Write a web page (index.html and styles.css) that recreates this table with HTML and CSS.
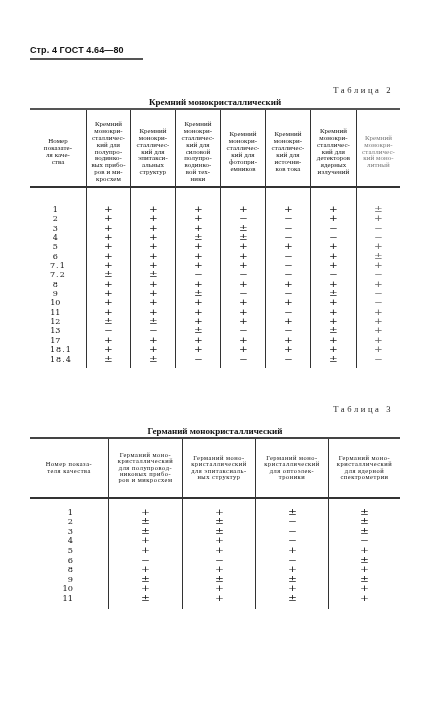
FILE: index.html
```html
<!DOCTYPE html>
<html lang="ru">
<head>
<meta charset="utf-8">
<title>ГОСТ 4.64—80, стр. 4</title>
<link rel="stylesheet" href="styles.css">
</head>
<body>
<div class="page">
  <div class="runhead">Стр. 4 ГОСТ 4.64—80</div>

  <div class="caption cap2">Таблица 2</div>
  <div class="title t2title">Кремний монокристаллический</div>

  <div class="t2">
    <div class="hc hnum">Номер<br>показате-<br>ля каче-<br>ства</div>
    <div class="hc vl">Кремний<br>монокри-<br>сталличес-<br>кий для<br>полупро-<br>водинко-<br>вых прибо-<br>ров и ми-<br>кросхем</div>
    <div class="hc vl">Кремний<br>монокри-<br>сталличес-<br>кий для<br>эпитакси-<br>альных<br>структур</div>
    <div class="hc vl">Кремний<br>монокри-<br>сталличес-<br>кий для<br>силовой<br>полупро-<br>водинко-<br>вой тех-<br>ники</div>
    <div class="hc vl">Кремний<br>монокри-<br>сталличес-<br>кий для<br>фотопри-<br>емников</div>
    <div class="hc vl">Кремний<br>монокри-<br>сталличес-<br>кий для<br>источни-<br>ков тока</div>
    <div class="hc vl">Кремний<br>монокри-<br>сталличес-<br>кий для<br>детекторов<br>ядерных<br>излучений</div>
    <div class="hc vl faded">Кремний<br>монокри-<br>сталличес-<br>кий моно-<br>литный</div>

    <div class="nc nc2">
      <div><span class="i">1</span></div><div><span class="i">2</span></div><div><span class="i">3</span></div><div><span class="i">4</span></div><div><span class="i">5</span></div><div><span class="i">6</span></div><div class="d">7.1</div><div class="d">7.2</div><div><span class="i">8</span></div><div><span class="i">9</span></div><div><span class="i">10</span></div><div><span class="i">11</span></div><div><span class="i">12</span></div><div><span class="i">13</span></div><div><span class="i">17</span></div><div class="d">18.1</div><div class="d">18.4</div>
    </div>
    <div class="bc b2 vl"><div><span>+</span></div><div><span>+</span></div><div><span>+</span></div><div><span>+</span></div><div><span>+</span></div><div><span>+</span></div><div><span>+</span></div><div><span>±</span></div><div><span>+</span></div><div><span>+</span></div><div><span>+</span></div><div><span>+</span></div><div><span>±</span></div><div><span>−</span></div><div><span>+</span></div><div><span>+</span></div><div><span>±</span></div></div>
    <div class="bc b2 vl"><div><span>+</span></div><div><span>+</span></div><div><span>+</span></div><div><span>+</span></div><div><span>+</span></div><div><span>+</span></div><div><span>+</span></div><div><span>±</span></div><div><span>+</span></div><div><span>+</span></div><div><span>+</span></div><div><span>+</span></div><div><span>±</span></div><div><span>−</span></div><div><span>+</span></div><div><span>+</span></div><div><span>±</span></div></div>
    <div class="bc b2 vl"><div><span>+</span></div><div><span>+</span></div><div><span>+</span></div><div><span>±</span></div><div><span>+</span></div><div><span>+</span></div><div><span>+</span></div><div><span>−</span></div><div><span>+</span></div><div><span>±</span></div><div><span>+</span></div><div><span>+</span></div><div><span>+</span></div><div><span>±</span></div><div><span>+</span></div><div><span>+</span></div><div><span>−</span></div></div>
    <div class="bc b2 vl"><div><span>+</span></div><div><span>−</span></div><div><span>±</span></div><div><span>±</span></div><div><span>+</span></div><div><span>+</span></div><div><span>+</span></div><div><span>−</span></div><div><span>+</span></div><div><span>−</span></div><div><span>+</span></div><div><span>+</span></div><div><span>+</span></div><div><span>−</span></div><div><span>+</span></div><div><span>+</span></div><div><span>−</span></div></div>
    <div class="bc b2 vl"><div><span>+</span></div><div><span>−</span></div><div><span>−</span></div><div><span>−</span></div><div><span>+</span></div><div><span>−</span></div><div><span>−</span></div><div><span>−</span></div><div><span>+</span></div><div><span>−</span></div><div><span>+</span></div><div><span>−</span></div><div><span>+</span></div><div><span>−</span></div><div><span>+</span></div><div><span>+</span></div><div><span>−</span></div></div>
    <div class="bc b2 vl"><div><span>+</span></div><div><span>+</span></div><div><span>−</span></div><div><span>−</span></div><div><span>+</span></div><div><span>+</span></div><div><span>+</span></div><div><span>−</span></div><div><span>+</span></div><div><span>±</span></div><div><span>+</span></div><div><span>+</span></div><div><span>+</span></div><div><span>±</span></div><div><span>+</span></div><div><span>+</span></div><div><span>±</span></div></div>
    <div class="bc b2 vl faded"><div><span>±</span></div><div><span>+</span></div><div><span>−</span></div><div><span>−</span></div><div><span>+</span></div><div><span>±</span></div><div><span>+</span></div><div><span>−</span></div><div><span>+</span></div><div><span>−</span></div><div><span>−</span></div><div><span>+</span></div><div><span>+</span></div><div><span>+</span></div><div><span>+</span></div><div><span>+</span></div><div><span>−</span></div></div>
  </div>

  <div class="caption cap3">Таблица 3</div>
  <div class="title t3title">Германий монокристаллический</div>

  <div class="t3">
    <div class="hc3 hnum3">Номер показа-<br>теля качества</div>
    <div class="hc3 vl">Германий моно-<br>кристаллический<br>для полупровод-<br>никовых прибо-<br>ров и микросхем</div>
    <div class="hc3 vl">Германий моно-<br>кристаллический<br>для эпитаксиаль-<br>ных структур</div>
    <div class="hc3 vl">Германий моно-<br>кристаллический<br>для оптоэлек-<br>троники</div>
    <div class="hc3 vl">Германий моно-<br>кристаллический<br>для ядерной<br>спектрометрии</div>

    <div class="nc nc3">
      <div><span class="i">1</span></div><div><span class="i">2</span></div><div><span class="i">3</span></div><div><span class="i">4</span></div><div><span class="i">5</span></div><div><span class="i">6</span></div><div><span class="i">8</span></div><div><span class="i">9</span></div><div><span class="i">10</span></div><div><span class="i">11</span></div>
    </div>
    <div class="bc b3 vl"><div><span>+</span></div><div><span>±</span></div><div><span>±</span></div><div><span>+</span></div><div><span>+</span></div><div><span>−</span></div><div><span>+</span></div><div><span>±</span></div><div><span>+</span></div><div><span>±</span></div></div>
    <div class="bc b3 vl"><div><span>+</span></div><div><span>±</span></div><div><span>±</span></div><div><span>+</span></div><div><span>+</span></div><div><span>−</span></div><div><span>+</span></div><div><span>±</span></div><div><span>+</span></div><div><span>+</span></div></div>
    <div class="bc b3 vl"><div><span>±</span></div><div><span>−</span></div><div><span>−</span></div><div><span>−</span></div><div><span>+</span></div><div><span>−</span></div><div><span>+</span></div><div><span>±</span></div><div><span>+</span></div><div><span>±</span></div></div>
    <div class="bc b3 vl"><div><span>±</span></div><div><span>±</span></div><div><span>±</span></div><div><span>−</span></div><div><span>+</span></div><div><span>±</span></div><div><span>+</span></div><div><span>±</span></div><div><span>+</span></div><div><span>+</span></div></div>
  </div>
</div>
</body>
</html>
```

FILE: styles.css
```css
html, body {
  margin: 0;
  padding: 0;
  background: #fff;
}

body {
  font-family: "Liberation Serif", "Times New Roman", serif;
  color: #111;
}

.page {
  width: 370px;
  padding: 45px 0 0 30px;
  will-change: transform;
}

.runhead {
  width: 113px;
  font: bold 9px/10px "Liberation Sans", Arial, sans-serif;
  letter-spacing: 0.1px;
  padding-bottom: 3px;
  border-bottom: 2px solid #555;
  white-space: nowrap;
  color: #111;
}

.caption {
  text-align: right;
  padding-right: 7px;
  font-size: 8.5px;
  line-height: 10px;
  letter-spacing: 2.6px;
  color: #222;
}

.cap2 { margin-top: 25px; }
.cap3 { margin-top: 36px; }

.title {
  text-align: center;
  font-weight: bold;
  font-size: 9px;
  line-height: 10px;
  color: #111;
}

.t2title { margin-top: 2px; }
.t3title { margin-top: 12px; }

/* ---------- Table 2 ---------- */
.t2 {
  display: grid;
  grid-template-columns: 56px 44px 45px 45px 45px 45px 46px 44px;
  border-top: 2px solid #555;
  margin-top: 1px;
}

.hc {
  box-sizing: border-box;
  height: 78px;
  padding-top: 8px;
  border-bottom: 2px solid #333;
  display: flex;
  align-items: center;
  justify-content: center;
  text-align: center;
  font-size: 6.9px;
  line-height: 6.9px;
  letter-spacing: 0.1px;
  white-space: nowrap;
  color: #111;
}

.vl {
  border-left: 1px solid #333;
}

.faded {
  color: #777;
}

.bc {
  text-align: center;
  font-family: "DejaVu Sans", sans-serif;
  color: #1a1a1a;
}

.bc span {
  display: inline-block;
  transform: scaleX(1.3);
}

.faded span {
  color: #666;
}

.b2 {
  padding: 17px 0 4px;
  font-size: 8px;
  line-height: 9.35px;
}

.nc {
  font-family: "DejaVu Serif", serif;
  color: #111;
  white-space: nowrap;
}

.nc2 {
  padding: 17px 0 4px 20px;
  font-size: 8px;
  line-height: 9.35px;
}

.nc2 .i {
  display: inline-block;
  width: 10.5px;
  text-align: center;
}

.nc2 .d {
  letter-spacing: 1px;
}

/* ---------- Table 3 ---------- */
.t3 {
  display: grid;
  grid-template-columns: 78px 74px 73px 73px 72px;
  border-top: 2px solid #444;
  margin-top: 1px;
}

.hc3 {
  box-sizing: border-box;
  height: 60px;
  border-bottom: 2px solid #333;
  display: flex;
  align-items: center;
  justify-content: center;
  text-align: center;
  font-size: 6.4px;
  line-height: 6.4px;
  letter-spacing: 0.55px;
  white-space: nowrap;
  color: #111;
}

.b3 {
  padding: 9px 0 6px;
  font-size: 8.2px;
  line-height: 9.55px;
}

.nc3 {
  padding: 9px 0 6px 32px;
  font-size: 8.2px;
  line-height: 9.55px;
}

.nc3 .i {
  display: inline-block;
  width: 11px;
  text-align: right;
}
```
